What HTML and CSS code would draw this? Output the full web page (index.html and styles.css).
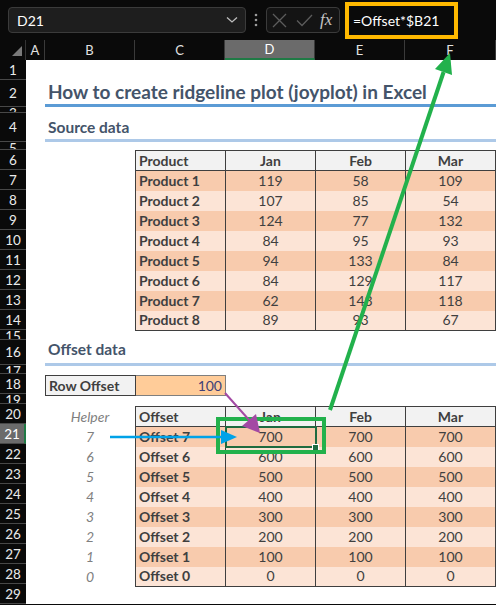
FILE: index.html
```html
<!DOCTYPE html>
<html lang="en">
<head>
    <meta charset="UTF-8">
    <title>Ridgeline plot - Excel</title>
    <link rel="stylesheet" href="styles.css">
</head>
<body>
    <div class="topbar">
        <div class="namebox">
            <span>D21</span>
            <svg width="12" height="8" viewBox="0 0 12 8"><path d="M1 1.5 L6 6 L11 1.5" fill="none" stroke="#bdbdbd" stroke-width="1.3"/></svg>
        </div>
        <svg class="dots" width="4" height="14" viewBox="0 0 4 14"><circle cx="2" cy="2" r="1.3" fill="#9a9a9a"/><circle cx="2" cy="7" r="1.3" fill="#9a9a9a"/><circle cx="2" cy="12" r="1.3" fill="#9a9a9a"/></svg>
        <div class="fxbox">
            <svg width="15" height="15" viewBox="0 0 15 15"><path d="M1 1 L14 14 M14 1 L1 14" stroke="#5c5c5c" stroke-width="1.3"/></svg>
            <svg width="17" height="13" viewBox="0 0 17 13"><path d="M1 6.5 L6 11.5 L16 1" fill="none" stroke="#5c5c5c" stroke-width="1.3"/></svg>
            <span class="fx">fx</span>
        </div>
        <div class="formula">=Offset*$B21</div>
    </div>

    <div class="colheads">
        <div class="corner"><span class="tri"></span></div>
        <div class="ch col-a">A</div>
        <div class="ch col-w">B</div>
        <div class="ch col-w">C</div>
        <div class="ch col-w active">D</div>
        <div class="ch col-w">E</div>
        <div class="ch col-last">F</div>
    </div>

    <div class="sheet">
        <div class="rownums">
            <div class="rn r20">1</div>
            <div class="rn r27">2</div>
            <div class="rn r6 cut">3</div>
            <div class="rn r29">4</div>
            <div class="rn r8 cut">5</div>
            <div class="rn r20">6</div>
            <div class="rn r20">7</div>
            <div class="rn r20">8</div>
            <div class="rn r20">9</div>
            <div class="rn r20">10</div>
            <div class="rn r20">11</div>
            <div class="rn r20">12</div>
            <div class="rn r20">13</div>
            <div class="rn r20">14</div>
            <div class="rn r10 cut">15</div>
            <div class="rn r25">16</div>
            <div class="rn r9 cut">17</div>
            <div class="rn r20">18</div>
            <div class="rn r10 cut">19</div>
            <div class="rn r20">20</div>
            <div class="rn r20 active">21</div>
            <div class="rn r20">22</div>
            <div class="rn r20">23</div>
            <div class="rn r20">24</div>
            <div class="rn r20">25</div>
            <div class="rn r20">26</div>
            <div class="rn r20">27</div>
            <div class="rn r20">28</div>
            <div class="rn r20">29</div>
        </div>

        <div class="cells">
            <div class="r20"></div>
            <div class="title">How to create ridgeline plot (joyplot) in Excel</div>
            <div class="r6"></div>
            <div class="heading src">Source data</div>
            <div class="r8"></div>

            <table class="grid">
                <tr class="head"><td>Product</td><td>Jan</td><td>Feb</td><td>Mar</td></tr>
                <tr class="dark"><td>Product 1</td><td>119</td><td>58</td><td>109</td></tr>
                <tr class="light"><td>Product 2</td><td>107</td><td>85</td><td>54</td></tr>
                <tr class="dark"><td>Product 3</td><td>124</td><td>77</td><td>132</td></tr>
                <tr class="light"><td>Product 4</td><td>84</td><td>95</td><td>93</td></tr>
                <tr class="dark"><td>Product 5</td><td>94</td><td>133</td><td>84</td></tr>
                <tr class="light"><td>Product 6</td><td>84</td><td>129</td><td>117</td></tr>
                <tr class="dark"><td>Product 7</td><td>62</td><td>143</td><td>118</td></tr>
                <tr class="light"><td>Product 8</td><td>89</td><td>93</td><td>67</td></tr>
            </table>

            <div class="r10"></div>
            <div class="heading off">Offset data</div>
            <div class="r9"></div>

            <div class="param">
                <div class="param-label">Row Offset</div>
                <div class="param-input">100</div>
            </div>

            <div class="r10"></div>

            <div class="offset-block">
                <div class="helper">
                    <div>Helper</div>
                    <div>7</div><div>6</div><div>5</div><div>4</div>
                    <div>3</div><div>2</div><div>1</div><div>0</div>
                </div>
                <table class="grid">
                    <tr class="head"><td>Offset</td><td>Jan</td><td>Feb</td><td>Mar</td></tr>
                    <tr class="dark"><td>Offset 7</td><td class="selected">700</td><td>700</td><td>700</td></tr>
                    <tr class="light"><td>Offset 6</td><td>600</td><td>600</td><td>600</td></tr>
                    <tr class="dark"><td>Offset 5</td><td>500</td><td>500</td><td>500</td></tr>
                    <tr class="light"><td>Offset 4</td><td>400</td><td>400</td><td>400</td></tr>
                    <tr class="dark"><td>Offset 3</td><td>300</td><td>300</td><td>300</td></tr>
                    <tr class="light"><td>Offset 2</td><td>200</td><td>200</td><td>200</td></tr>
                    <tr class="dark"><td>Offset 1</td><td>100</td><td>100</td><td>100</td></tr>
                    <tr class="light"><td>Offset 0</td><td>0</td><td>0</td><td>0</td></tr>
                </table>
            </div>
        </div>
    </div>

    <!-- annotations drawn over the screenshot -->
    <svg class="notes" width="496" height="605" viewBox="0 0 496 605">
        <rect x="347" y="4" width="109" height="33" fill="none" stroke="#ffb900" stroke-width="4"/>
        <rect x="218" y="419" width="106" height="33" fill="none" stroke="#22b14c" stroke-width="4"/>
        <line x1="330" y1="410" x2="443.6" y2="72" stroke="#22b14c" stroke-width="4"/>
        <polygon points="450,53 435,69 452,75" fill="#22b14c"/>
        <line x1="225" y1="393" x2="250" y2="421" stroke="#a349a4" stroke-width="2"/>
        <polygon points="260,433 242,426 256,414" fill="#a349a4"/>
        <line x1="110" y1="437" x2="222" y2="437" stroke="#00a2e8" stroke-width="2.5"/>
        <polygon points="237,437 221,430 221,444" fill="#00a2e8"/>
    </svg>
</body>
</html>
```

FILE: styles.css
```css
body {
    margin: 0;
    padding: 0;
    width: 496px;
    height: 605px;
    overflow: hidden;
    position: relative;
    background-color: #0a0a0a;
    font-family: Lato, "Liberation Sans", sans-serif;
}

/* formula bar */
.topbar {
    height: 40px;
    display: flex;
    align-items: center;
    color: #fff;
}

.namebox {
    margin-left: 8px;
    width: 238px;
    height: 26px;
    box-sizing: border-box;
    border: 1px solid #3b3b3b;
    border-radius: 4px;
    background-color: #1e1e1e;
    display: flex;
    align-items: center;
    justify-content: space-between;
    padding: 0 7px 0 8px;
    font-size: 14px;
}

.dots {
    margin-left: 8px;
}

.fxbox {
    margin-left: 8px;
    width: 74px;
    height: 26px;
    box-sizing: border-box;
    border: 1px solid #3b3b3b;
    border-radius: 4px;
    background-color: #141414;
    display: flex;
    align-items: center;
    padding-left: 5px;
    gap: 9px;
}

.fx {
    font-family: "Liberation Serif", serif;
    font-style: italic;
    font-size: 17px;
    color: #c4c4c4;
    margin-left: -2px;
}

.formula {
    flex: 1;
    padding-left: 13px;
    font-size: 14px;
    margin-top: 1px;
}

/* column headers */
.colheads {
    height: 20px;
    display: flex;
    color: #e2e2e2;
    font-size: 13px;
}

.corner {
    width: 26px;
    box-sizing: border-box;
    display: flex;
    justify-content: flex-end;
    align-items: flex-end;
    padding: 0 3px 4px 0;
    border-right: 1px solid #333;
}

.tri {
    width: 0;
    height: 0;
    border-left: 10px solid transparent;
    border-bottom: 10px solid #7a7a7a;
}

.ch {
    box-sizing: border-box;
    border-right: 1px solid #3a3a3a;
    text-align: center;
    line-height: 20px;
}

.col-a { width: 19px; }
.col-w { width: 90px; }
.col-last { flex: 1; }

.ch.active {
    background-color: #6b6b6b;
    color: #fff;
    border-bottom: 2px solid #1f7a45;
    line-height: 18px;
}

/* sheet */
.sheet {
    display: flex;
}

.rownums {
    width: 26px;
    flex-shrink: 0;
    color: #eaeaea;
    font-size: 13.5px;
}

.rn {
    box-sizing: border-box;
    border-bottom: 1px solid #484848;
    display: flex;
    align-items: center;
    justify-content: center;
    overflow: hidden;
}

.rn.cut {
    align-items: flex-start;
    line-height: 13px;
}

.rn.active {
    background-color: #6b6b6b;
    color: #fff;
    border-right: 2px solid #1f7a45;
}

.r6 { height: 6px; }
.r8 { height: 8px; }
.r9 { height: 9px; }
.r10 { height: 10px; }
.r20 { height: 20px; }
.r25 { height: 25px; }
.r27 { height: 27px; }
.r29 { height: 29px; }

.cells {
    flex: 1;
    background-color: #fff;
    color: #3f3f3f;
    font-size: 14px;
}

.title {
    margin-left: 19px;
    height: 27px;
    box-sizing: border-box;
    border-bottom: 3px solid #5b9bd5;
    padding-left: 3px;
    font-size: 19px;
    font-weight: bold;
    color: #44546a;
    line-height: 24px;
    white-space: nowrap;
}

.heading {
    margin-left: 19px;
    box-sizing: border-box;
    border-bottom: 3px solid #adc9e8;
    padding-left: 3px;
    font-size: 15.5px;
    font-weight: bold;
    color: #44546a;
    display: flex;
    align-items: flex-end;
}

.heading.src {
    height: 29px;
    padding-bottom: 3px;
}

.heading.off {
    height: 25px;
    padding-bottom: 5px;
}

/* data tables */
.grid {
    margin-left: 109px;
    border-collapse: collapse;
    table-layout: fixed;
    width: 361px;
}

.grid td {
    width: 90px;
    height: 20px;
    padding: 0 3px;
    box-sizing: border-box;
    border-left: 1px solid #3f3f3f;
    border-right: 1px solid #3f3f3f;
    text-align: center;
    line-height: 18px;
    white-space: nowrap;
}

.grid td:first-child {
    text-align: left;
    font-weight: bold;
}

.grid tr.head td {
    background-color: #f2f2f2;
    font-weight: bold;
    border-top: 1px solid #3f3f3f;
    border-bottom: 1px solid #3f3f3f;
}

.grid tr:last-child td {
    border-bottom: 1px solid #3f3f3f;
}

.grid tr.dark td { background-color: #f8cbad; }
.grid tr.light td { background-color: #fce4d6; }

.grid td.selected {
    position: relative;
    outline: 2px solid #1e6b40;
    outline-offset: -1px;
}

.grid td.selected::after {
    content: "";
    position: absolute;
    right: -4px;
    bottom: -4px;
    width: 5px;
    height: 5px;
    background-color: #1e6b40;
    border: 1px solid #fff;
}

/* row offset input */
.param {
    display: flex;
    margin-left: 19px;
    height: 21px;
}

.param-label {
    width: 91px;
    box-sizing: border-box;
    background-color: #f2f2f2;
    border: 1px solid #3f3f3f;
    font-weight: bold;
    padding-left: 3px;
    line-height: 19px;
}

.param-input {
    width: 90px;
    box-sizing: border-box;
    background-color: #ffcc99;
    border: 1px solid #7f7f7f;
    border-left: none;
    color: #3f3f76;
    text-align: right;
    padding-right: 3px;
    line-height: 19px;
}

.offset-block {
    display: flex;
}

.offset-block .grid {
    margin-left: 0;
}

.helper {
    margin-left: 19px;
    width: 90px;
    color: #7f7f7f;
    font-style: italic;
    text-align: center;
    padding-top: 1px;
}

.helper div {
    height: 20px;
    line-height: 20px;
}

.notes {
    position: absolute;
    top: 0;
    left: 0;
    pointer-events: none;
}
```
